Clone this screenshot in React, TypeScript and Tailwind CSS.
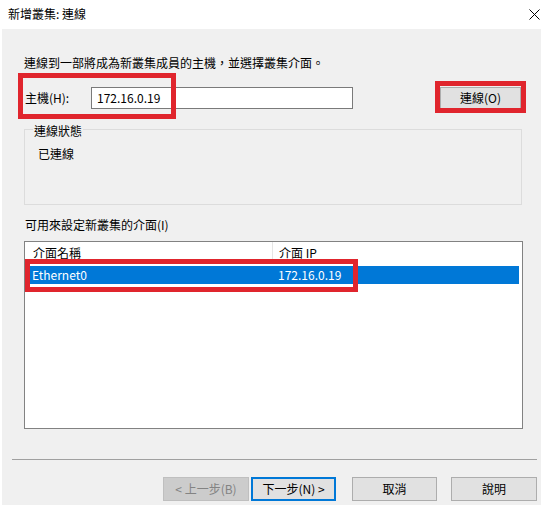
import React from "react";

export default function App() {
  return (
    <div
      className="relative w-[545px] h-[508px] bg-white text-[12px] leading-[14px] text-black overflow-hidden"
      style={{ fontFamily: '"Noto Sans CJK TC", "Noto Sans", sans-serif' }}
    >
      {/* Title bar */}
      <div className="h-[29px] flex items-center justify-between pl-[8px] pr-[5px]">
        <span className="mt-[-2px]">新增叢集: 連線</span>
        <svg width="11" height="11" viewBox="0 0 11 11" className="mt-[-1px]">
          <path d="M0.5 0.5 L10.5 10.5 M10.5 0.5 L0.5 10.5" stroke="#000" strokeWidth="1" fill="none" />
        </svg>
      </div>

      {/* Body */}
      <div className="ml-[2px] w-[539px] h-[476px] bg-[#f0f0f0] flex flex-col">
        <div className="mt-[27px] pl-[22px] h-[14px]">連線到一部將成為新叢集成員的主機，並選擇叢集介面。</div>

        <div className="mt-[17px] h-[22px] flex items-center pl-[23px]">
          <span className="w-[66px]">主機(H):</span>
          <div className="w-[262px] h-[22px] bg-white border border-[#7a7a7a] flex items-center pl-[5px]">
            172.16.0.19
          </div>
          <div className="ml-auto mr-[20px] w-[81px] h-[22px] bg-[#e1e1e1] border border-[#adadad] flex items-center justify-center">
            連線(O)
          </div>
        </div>

        <div className="relative mt-[20px] ml-[22px] w-[498px] h-[76px] border border-[#dcdcdc] pt-[17px] pl-[13px]">
          <span className="absolute top-[-6px] left-[8px] px-[1px] bg-[#f0f0f0]">連線狀態</span>
          <span>已連線</span>
        </div>

        <div className="mt-[13px] pl-[23px] h-[14px]">可用來設定新叢集的介面(I)</div>

        <div className="mt-[9px] ml-[22px] w-[499px] h-[188px] border border-[#828282] bg-white flex flex-col">
          <div className="h-[21px] flex">
            <div className="w-[248px] border-r border-[#e5e5e5] pl-[8px] flex items-center">介面名稱</div>
            <div className="flex-1 pl-[6px] flex items-center">介面 IP</div>
          </div>
          <div className="mt-[3px] ml-[3px] mr-[3px] h-[18px] bg-[#0078d7] text-white flex items-center">
            <div className="w-[250px] pl-[4px]">Ethernet0</div>
            <div>172.16.0.19</div>
          </div>
        </div>

        <div className="mt-[30px] ml-[10px] mr-[4px] h-[1px] bg-[#a0a0a0]" />

        <div className="mt-[17px] h-[24px] flex pl-[161px]">
          <div className="w-[86px] h-[24px] bg-[#cccccc] border border-[#bfbfbf] text-[#838383] flex items-center justify-center">
            &lt; 上一步(B)
          </div>
          <div className="ml-[2px] w-[85px] h-[24px] bg-[#e1e1e1] border-2 border-[#0078d7] flex items-center justify-center">
            下一步(N) &gt;
          </div>
          <div className="ml-[16px] w-[85px] h-[24px] bg-[#e1e1e1] border border-[#adadad] flex items-center justify-center">
            取消
          </div>
          <div className="ml-[14px] w-[86px] h-[24px] bg-[#e1e1e1] border border-[#adadad] flex items-center justify-center">
            說明
          </div>
        </div>
      </div>

      {/* Red annotation boxes */}
      <div className="absolute left-[18px] top-[73px] w-[158px] h-[46px] border-[5px] border-[#e0252d]" />
      <div className="absolute left-[435px] top-[81px] w-[91px] h-[32px] border-[5px] border-[#e0252d]" />
      <div className="absolute left-[25px] top-[259px] w-[333px] h-[33px] border-[5px] border-[#e0252d]" />
    </div>
  );
}
